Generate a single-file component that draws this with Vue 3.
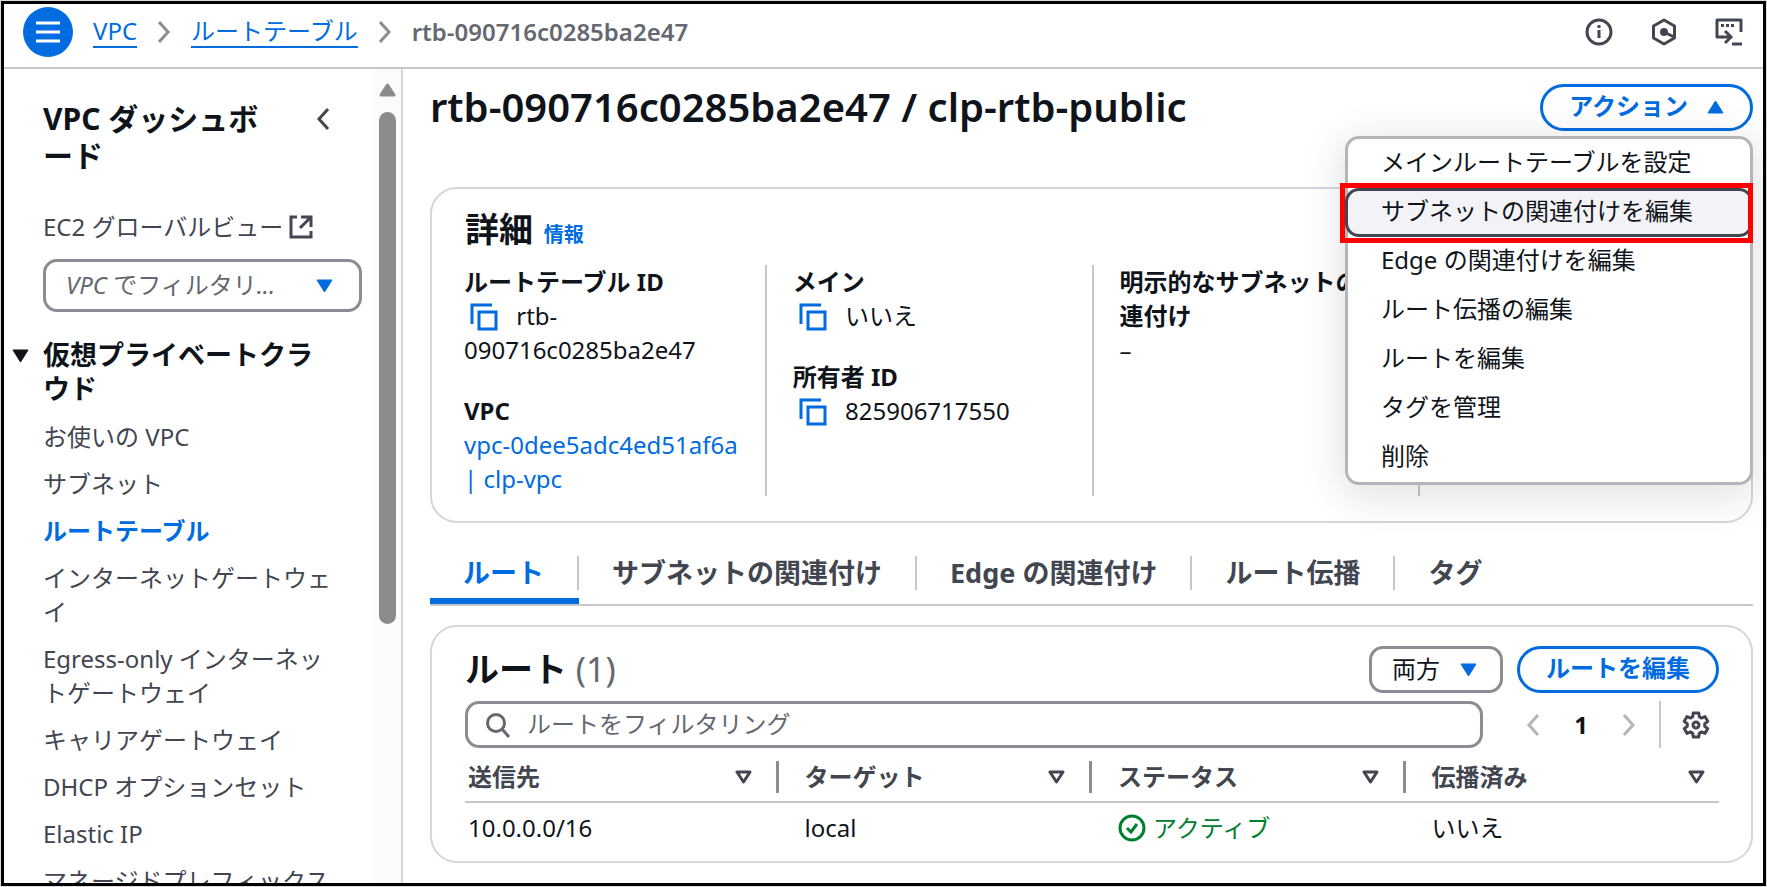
<script setup>
import { ref } from 'vue';

const menuOpen = ref(true);
const filterText = ref('');
const activeNav = ref('ルートテーブル');
const activeTab = ref('ルート');
const activeAction = ref('サブネットの関連付けを編集');

const navItems = [
  'お使いの VPC',
  'サブネット',
  'ルートテーブル',
  'インターネットゲートウェイ',
  'Egress-only インターネットゲートウェイ',
  'キャリアゲートウェイ',
  'DHCP オプションセット',
  'Elastic IP',
  'マネージドプレフィックスリスト',
];

const actions = [
  'メインルートテーブルを設定',
  'サブネットの関連付けを編集',
  'Edge の関連付けを編集',
  'ルート伝播の編集',
  'ルートを編集',
  'タグを管理',
  '削除',
];

const tabs = ['ルート', 'サブネットの関連付け', 'Edge の関連付け', 'ルート伝播', 'タグ'];
const columns = ['送信先', 'ターゲット', 'ステータス', '伝播済み'];
const routes = [{ destination: '10.0.0.0/16', target: 'local', status: 'アクティブ', propagated: 'いいえ' }];
</script>

<template>
  <div class="frame">
    <header class="topbar">
      <button class="menu-button" type="button" aria-label="メニュー">
        <svg viewBox="0 0 24 24" width="24" height="24"><path d="M0 3h24M0 12h24M0 21h24" /></svg>
      </button>
      <nav class="breadcrumb" aria-label="パンくずリスト">
        <a href="#">VPC</a>
        <svg class="crumb-arrow" viewBox="0 0 14 22" width="14" height="22"><path d="M2 1l9 10-9 10" /></svg>
        <a href="#">ルートテーブル</a>
        <svg class="crumb-arrow" viewBox="0 0 14 22" width="14" height="22"><path d="M2 1l9 10-9 10" /></svg>
        <span class="current">rtb-090716c0285ba2e47</span>
      </nav>
      <div class="top-icons">
        <button class="icon-button" type="button" aria-label="情報">
          <svg viewBox="0 0 28 28" width="28" height="28">
            <circle cx="14" cy="14" r="12" />
            <path d="M14 12v8M14 7v3" />
          </svg>
        </button>
        <button class="icon-button" type="button" aria-label="診断">
          <svg viewBox="0 0 28 28" width="28" height="28">
            <path d="M14 2l10.500 6v12L14 26 3.500 20V8z" stroke-linejoin="round" />
            <circle cx="14" cy="14" r="2.500" class="solid" />
            <path d="M14 14l10 5" />
          </svg>
        </button>
        <button class="icon-button" type="button" aria-label="CloudShell">
          <svg viewBox="0 0 28 28" width="28" height="28">
            <path d="M8 19H2V2h24v12" stroke-linejoin="round" />
            <path d="M6 7.500h3M11 7.500h3M16 7.500h3" />
            <path d="M7 19h8M10 13l6 6-6 6M17 26h10" />
          </svg>
        </button>
      </div>
    </header>

    <div class="body">
      <aside class="sidebar">
        <div class="side-content">
          <div class="side-head">
            <h2>VPC ダッシュボード</h2>
            <button class="icon-button collapse" type="button" aria-label="閉じる">
              <svg viewBox="0 0 14 22" width="14" height="22"><path d="M12 1L3 11l9 10" /></svg>
            </button>
          </div>
          <a class="global-view" href="#">
            EC2 グローバルビュー
            <svg viewBox="0 0 24 24" width="24" height="24">
              <path d="M8 2H2v20h20v-6M12 2h10v10M22 2L11 13" />
            </svg>
          </a>
          <div class="select-wrap vpc-filter">
            <select aria-label="VPC でフィルタリング">
              <option>VPC でフィルタリ...</option>
            </select>
            <svg class="caret" viewBox="0 0 17 14" width="17" height="14"><path d="M1 1h15L8.500 13z" /></svg>
          </div>
          <h3 class="section-title">
            <svg class="section-caret" viewBox="0 0 17 14" width="17" height="14"><path d="M1 1h15L8.500 13z" /></svg>
            仮想プライベートクラウド
          </h3>
          <ul class="nav-list">
            <li v-for="item in navItems" :key="item">
              <a href="#" :class="{ active: item === activeNav }" @click.prevent="activeNav = item">{{ item }}</a>
            </li>
          </ul>
        </div>
        <div class="scroll-track">
          <svg viewBox="0 0 17 14" width="17" height="14"><path d="M8.500 2L15 12H2z" /></svg>
          <div class="scroll-thumb"></div>
        </div>
      </aside>

      <main class="content">
        <div class="page-head">
          <h1>rtb-090716c0285ba2e47 / clp-rtb-public</h1>
          <div class="action-wrap">
            <button class="pill" type="button" :aria-expanded="menuOpen" @click="menuOpen = !menuOpen">
              アクション
              <svg class="caret" viewBox="0 0 17 14" width="17" height="14"><path d="M8.500 1L16 13H1z" /></svg>
            </button>
            <ul v-if="menuOpen" class="menu">
              <li v-for="action in actions" :key="action" :class="{ selected: action === activeAction }">
                <button type="button" @click="activeAction = action">{{ action }}</button>
              </li>
            </ul>
          </div>
        </div>

        <section class="card details">
          <h2>詳細 <a class="info" href="#">情報</a></h2>
          <div class="detail-grid">
            <dl>
              <div>
                <dt>ルートテーブル ID</dt>
                <dd>
                  <button class="copy" type="button" aria-label="コピー">
                    <svg viewBox="0 0 28 28" width="28" height="28"><path d="M2 21V2h20M9 9h17v17H9z" /></svg>
                  </button>
                  rtb-090716c0285ba2e47
                </dd>
              </div>
              <div>
                <dt>VPC</dt>
                <dd><a href="#"><span class="vpc-id">vpc-0dee5adc4ed51af6a</span> | clp-vpc</a></dd>
              </div>
            </dl>
            <dl>
              <div>
                <dt>メイン</dt>
                <dd>
                  <button class="copy" type="button" aria-label="コピー">
                    <svg viewBox="0 0 28 28" width="28" height="28"><path d="M2 21V2h20M9 9h17v17H9z" /></svg>
                  </button>
                  いいえ
                </dd>
              </div>
              <div>
                <dt>所有者 ID</dt>
                <dd>
                  <button class="copy" type="button" aria-label="コピー">
                    <svg viewBox="0 0 28 28" width="28" height="28"><path d="M2 21V2h20M9 9h17v17H9z" /></svg>
                  </button>
                  825906717550
                </dd>
              </div>
            </dl>
            <dl>
              <div>
                <dt>明示的なサブネットの関連付け</dt>
                <dd>–</dd>
              </div>
            </dl>
            <dl></dl>
          </div>
        </section>

        <div class="tabs" role="tablist">
          <button
            v-for="tab in tabs"
            :key="tab"
            type="button"
            role="tab"
            :aria-selected="tab === activeTab"
            :class="{ active: tab === activeTab }"
            @click="activeTab = tab"
          >
            <span>{{ tab }}</span>
          </button>
        </div>

        <section class="card routes">
          <div class="routes-head">
            <h2>ルート <span class="count">(1)</span></h2>
            <div class="select-wrap both">
              <select aria-label="表示するルート">
                <option>両方</option>
              </select>
              <svg class="caret" viewBox="0 0 17 14" width="17" height="14"><path d="M1 1h15L8.500 13z" /></svg>
            </div>
            <button class="pill" type="button">ルートを編集</button>
          </div>
          <div class="tools">
            <label class="search">
              <svg viewBox="0 0 26 26" width="26" height="26">
                <circle cx="11" cy="11" r="8.500" />
                <path d="M17 17l7 8" />
              </svg>
              <input v-model="filterText" type="text" placeholder="ルートをフィルタリング" aria-label="ルートをフィルタリング">
            </label>
            <div class="pager">
              <button class="icon-button" type="button" aria-label="前のページ" disabled>
                <svg viewBox="0 0 14 22" width="14" height="22"><path d="M12 1L3 11l9 10" /></svg>
              </button>
              <button class="page" type="button">1</button>
              <button class="icon-button" type="button" aria-label="次のページ" disabled>
                <svg viewBox="0 0 14 22" width="14" height="22"><path d="M2 1l9 10-9 10" /></svg>
              </button>
            </div>
            <button class="icon-button settings" type="button" aria-label="設定">
              <svg viewBox="0 0 28 28" width="28" height="28">
                <path
                  d="M10.700 5.800L11.200 2h5.600l.5 3.800 2.100 1.300L23 5.600l2.800 4.800-3.100 2.400v2.400l3.100 2.400L23 22.400l-3.600-1.500-2.100 1.300-.5 3.800h-5.600l-.5-3.800-2.100-1.300L5 22.400l-2.800-4.800 3.100-2.400v-2.400l-3.100-2.400L5 5.600l3.600 1.500z"
                  stroke-linejoin="round"
                />
                <circle cx="14" cy="14" r="3" />
              </svg>
            </button>
          </div>
          <table>
            <thead>
              <tr>
                <th v-for="column in columns" :key="column" scope="col">
                  <div class="th-inner">
                    {{ column }}
                    <svg viewBox="0 0 17 14" width="17" height="14"><path d="M2 2h13L8.500 12z" stroke-linejoin="round" /></svg>
                  </div>
                </th>
              </tr>
            </thead>
            <tbody>
              <tr v-for="route in routes" :key="route.destination">
                <td>{{ route.destination }}</td>
                <td>{{ route.target }}</td>
                <td>
                  <span class="status">
                    <svg viewBox="0 0 28 28" width="28" height="28">
                      <circle cx="14" cy="14" r="12" />
                      <path d="M9 14l4 4 6-8" />
                    </svg>
                    {{ route.status }}
                  </span>
                </td>
                <td>{{ route.propagated }}</td>
              </tr>
            </tbody>
          </table>
        </section>
      </main>
    </div>
  </div>
</template>

<style>
body { background: #d9dcda; }
</style>

<style scoped>
.frame {
  --blue: #006ce0;
  --ink: #0f141a;
  --gray: #424650;
  --muted: #656871;
  --edge: #8c8c94;
  --line: #c6c6cd;
  display: flex;
  flex-direction: column;
  height: calc(100vh - 2px);
  margin: 1px;
  box-sizing: border-box;
  border: 3px solid #000;
  background: #fff;
  color: var(--ink);
  font-family: "Noto Sans", "Noto Sans CJK JP", sans-serif;
  font-size: 24px;
  line-height: 34px;
  font-synthesis-style: none;
  overflow: hidden;
}
*, *::before, *::after { box-sizing: border-box; }
h1, h2, h3, ul, dl, dd { margin: 0; padding: 0; }
ul { list-style: none; }
a { color: var(--blue); text-decoration: none; }
button, input, select { font: inherit; color: inherit; }
button { padding: 0; border: 0; background: none; cursor: pointer; }
svg { display: block; flex: none; fill: none; stroke: currentColor; stroke-width: 3; }
.solid { fill: currentColor; }
.caret { fill: var(--blue); stroke: var(--blue); stroke-width: 1; stroke-linejoin: round; }

/* top bar */
.topbar {
  display: flex;
  align-items: center;
  flex: none;
  height: 65px;
  padding: 0 20px 7px 19px;
  border-bottom: 2px solid var(--line);
}
.menu-button {
  display: flex;
  align-items: center;
  justify-content: center;
  width: 50px;
  height: 50px;
  border-radius: 50%;
  background: var(--blue);
  color: #fff;
}
.breadcrumb { display: flex; align-items: center; gap: 20px; margin-left: 20px; }
.breadcrumb a { border-bottom: 2px solid var(--blue); line-height: 30px; }
.crumb-arrow { color: var(--edge); }
.current { color: var(--muted); font-weight: 600; }
.top-icons { display: flex; gap: 37px; margin-left: auto; color: var(--gray); }

.body { display: flex; flex: 1; min-height: 0; }

/* sidebar */
.sidebar { display: flex; flex: 0 0 399px; border-right: 2px solid #d5d5da; overflow: hidden; }
.side-content { flex: 1; min-width: 0; padding: 31px 11px 0 39px; }
.side-head { display: flex; justify-content: space-between; align-items: flex-start; padding-right: 32px; }
.side-head h2 { width: 230px; font-size: 30px; line-height: 37px; }
.collapse { margin-top: 8px; color: var(--gray); }
.global-view { display: flex; align-items: center; gap: 6px; margin-top: 36px; color: var(--gray); }
.select-wrap { display: flex; position: relative; }
.select-wrap select {
  width: 100%;
  appearance: none;
  border: 3px solid var(--edge);
  border-radius: 14px;
  background: #fff;
}
.select-wrap .caret { position: absolute; top: 50%; margin-top: -7px; pointer-events: none; }
.vpc-filter { margin-top: 15px; }
.vpc-filter select { height: 53px; padding: 0 56px 2px 20px; color: var(--muted); font-style: italic; }
.vpc-filter .caret { right: 29px; }
.section-title { position: relative; margin-top: 26px; padding-right: 40px; font-size: 27px; }
.section-caret { position: absolute; left: -31px; top: 11px; fill: var(--ink); stroke-width: 1; }
.nav-list { display: flex; flex-direction: column; gap: 13px; margin-top: 14px; padding-right: 28px; }
.nav-list li { line-break: anywhere; }
.nav-list a { color: var(--gray); }
.nav-list a.active { color: var(--blue); font-weight: 700; }
.scroll-track {
  display: flex;
  flex-direction: column;
  align-items: center;
  gap: 15px;
  width: 28px;
  padding-top: 14px;
  background: #fbfbfb;
}
.scroll-track svg { fill: #8b8b8b; stroke: #8b8b8b; stroke-linejoin: round; }
.scroll-thumb { width: 17px; height: 64%; border-radius: 9px; background: #8b8b8b; }

/* main column */
.content { flex: 1; min-width: 0; padding: 15px 10px 0 27px; }
.page-head { display: flex; align-items: center; justify-content: space-between; }
.page-head h1 { padding-bottom: 2px; font-size: 40px; line-height: 45px; font-weight: 600; }
.pill {
  display: flex;
  align-items: center;
  height: 47px;
  padding: 0 26px 3px;
  border: 3px solid var(--blue);
  border-radius: 24px;
  background: #fff;
  color: var(--blue);
  font-weight: 700;
}
.pill .caret { margin: 2px 0 0 19px; }
.action-wrap { position: relative; }
.menu {
  position: absolute;
  z-index: 2;
  top: 52px;
  right: 0;
  width: 408px;
  border: 3px solid #b4b4bb;
  border-radius: 14px;
  background: #fff;
  box-shadow: 0 8px 40px 4px rgba(0, 20, 10, 0.12);
}
.menu li { position: relative; height: 49px; }
.menu button { width: 100%; height: 100%; padding: 0 33px 3px; text-align: left; white-space: nowrap; }
.menu .selected { margin: 0 -3px; border: 3px solid var(--gray); border-radius: 14px; background: #f3f3f7; }
/* red marker around the chosen action */
.menu .selected::after {
  content: "";
  position: absolute;
  inset: -8px -3px -9px -8px;
  border: 5px solid #f00;
  pointer-events: none;
}

.card { border: 2px solid #d5d5dc; border-radius: 27px; background: #fff; }
.card h2 { font-size: 34px; line-height: 41px; }
.details { margin-top: 56px; padding: 20px 33px 25px; }
.info { margin-left: 2px; font-size: 20px; }
.detail-grid {
  display: grid;
  grid-template-columns: repeat(4, minmax(0, 1fr));
  gap: 27px;
  margin: 10px 0 0 -27px;
}
.detail-grid dl { display: flex; flex-direction: column; gap: 27px; padding-left: 26px; }
.detail-grid dl + dl { border-left: 2px solid var(--line); }
dt { font-weight: 700; }
.copy { display: inline-block; height: 28px; margin: 0 12px 0 6px; vertical-align: -6px; color: var(--blue); }
.vpc-id { white-space: nowrap; }

.tabs { display: flex; margin-top: 26px; border-bottom: 2px solid var(--line); }
.tabs button {
  padding: 7px 0 8px;
  border-bottom: 6px solid transparent;
  color: var(--gray);
  font-size: 27px;
  font-weight: 700;
}
.tabs span { display: block; padding: 0 33px; border-right: 2px solid var(--line); }
.tabs button:last-child span { border-right: 0; }
.tabs .active { border-bottom-color: var(--blue); color: var(--blue); }

.routes { margin-top: 19px; padding: 19px 32px 16px 33px; }
.routes-head { display: flex; align-items: center; gap: 14px; }
.routes-head h2 { margin-right: auto; }
.count { color: var(--muted); font-weight: 400; }
.both select { width: 134px; height: 47px; padding: 0 20px 2px; }
.both .caret { right: 26px; }
.tools { display: flex; align-items: center; margin-top: 8px; }
.search {
  display: flex;
  align-items: center;
  flex: 1;
  gap: 16px;
  height: 47px;
  padding: 0 17px;
  border: 3px solid var(--edge);
  border-radius: 14px;
  color: var(--muted);
}
.search input { flex: 1; min-width: 0; padding: 0 0 2px; border: 0; outline: 0; background: none; }
.search input::placeholder { color: var(--muted); opacity: 1; }
.pager { display: flex; align-items: center; gap: 34px; padding: 0 23px 0 43px; }
.pager .icon-button { color: #b4b4bb; }
.page { font-weight: 700; }
.settings { display: flex; align-items: center; height: 47px; padding: 0 9px 0 21px; border-left: 2px solid var(--line); color: var(--gray); }
table { width: 100%; border-collapse: collapse; table-layout: fixed; text-align: left; }
th { padding: 13px 0 8px; border-bottom: 2px solid var(--line); color: var(--gray); }
.th-inner {
  display: flex;
  align-items: center;
  justify-content: space-between;
  height: 32px;
  padding: 0 24px 0 26px;
  border-right: 3px solid var(--edge);
}
th:first-child .th-inner { padding-left: 3px; }
th:last-child .th-inner { padding-right: 14px; border-right: 0; }
td { padding: 8px 0 0 26px; }
td:first-child { padding-left: 3px; }
.status { display: flex; align-items: center; gap: 7px; color: #00802f; }
</style>
